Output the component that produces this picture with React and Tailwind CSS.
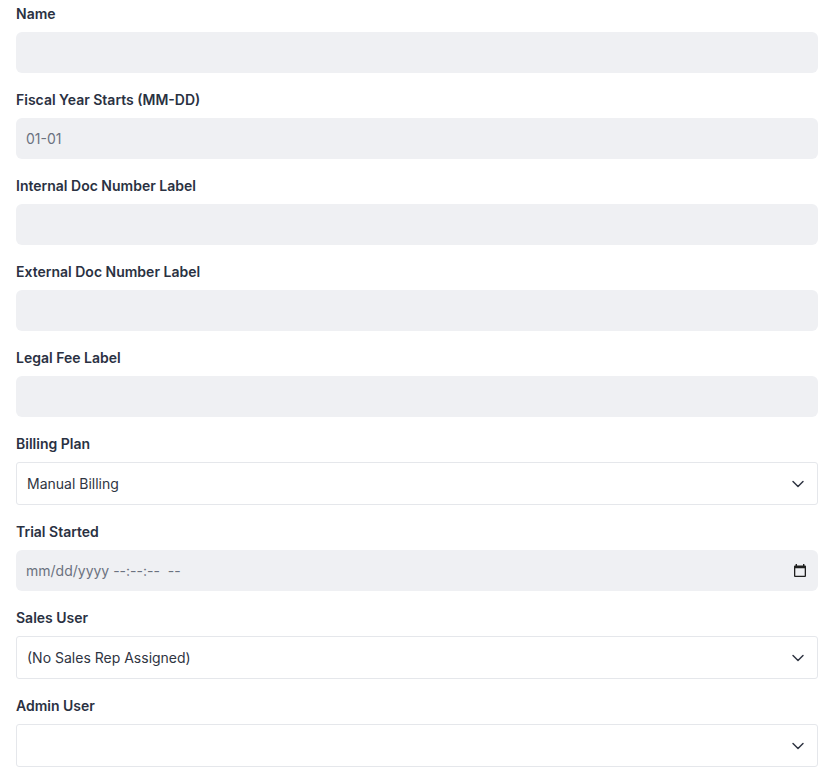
import { ChevronDown } from 'lucide-react';

const textFields = [
  { label: 'Name', placeholder: '' },
  { label: 'Fiscal Year Starts (MM-DD)', placeholder: '01-01' },
  { label: 'Internal Doc Number Label', placeholder: '' },
  { label: 'External Doc Number Label', placeholder: '' },
  { label: 'Legal Fee Label', placeholder: '' },
];

function Label({ children }) {
  return (
    <label className="block h-5 mb-2 text-sm leading-5 font-semibold text-[#2a3142]">
      {children}
    </label>
  );
}

function TextField({ label, placeholder }) {
  return (
    <div className="mb-[17px]">
      <Label>{label}</Label>
      <input
        type="text"
        placeholder={placeholder}
        className="block w-full h-[41px] rounded-md bg-[#eff0f3] px-2.5 text-sm text-gray-800 placeholder:text-[#6b7280] outline-none"
      />
    </div>
  );
}

function SelectField({ label, options }) {
  return (
    <div className="mb-[17px]">
      <Label>{label}</Label>
      <div className="relative">
        <select className="block w-full h-[43px] appearance-none rounded-[3px] border border-[#e5e7eb] bg-white pl-2.5 pr-10 text-sm text-[#2f3542] outline-none">
          {options.map((o) => (
            <option key={o}>{o}</option>
          ))}
        </select>
        <ChevronDown
          className="pointer-events-none absolute right-[10px] top-1/2 -translate-y-1/2 w-5 h-5 text-[#2f3542]"
          strokeWidth={1.75}
        />
      </div>
    </div>
  );
}

function CalendarIcon() {
  return (
    <svg width="12" height="13" viewBox="0 0 12 13" className="text-[#1f1f1f]">
      <path
        fill="currentColor"
        fillRule="evenodd"
        d="M1 1.5h10a1 1 0 0 1 1 1v9.5a1 1 0 0 1-1 1H1a1 1 0 0 1-1-1V2.5a1 1 0 0 1 1-1zM1.3 4.3v7.4h9.4V4.3z"
      />
      <rect x="1.6" y="0" width="1.4" height="2" fill="currentColor" />
      <rect x="9" y="0" width="1.4" height="2" fill="currentColor" />
    </svg>
  );
}

export default function App() {
  return (
    <div className="bg-white pt-1 pl-4 pr-[10px] font-['Inter','Noto_Sans',sans-serif]">
      {textFields.map((f) => (
        <TextField key={f.label} {...f} />
      ))}

      <SelectField label="Billing Plan" options={['Manual Billing']} />

      <div className="mb-[17px]">
        <Label>Trial Started</Label>
        <div className="flex items-center justify-between w-full h-[41px] rounded-md bg-[#eff0f3] pl-2.5 pr-3 text-sm text-[#6b7280]">
          <span className="whitespace-pre">mm/dd/yyyy --:--:--  --</span>
          <CalendarIcon />
        </div>
      </div>

      <SelectField label="Sales User" options={['(No Sales Rep Assigned)']} />
      <SelectField label="Admin User" options={['']} />
    </div>
  );
}
